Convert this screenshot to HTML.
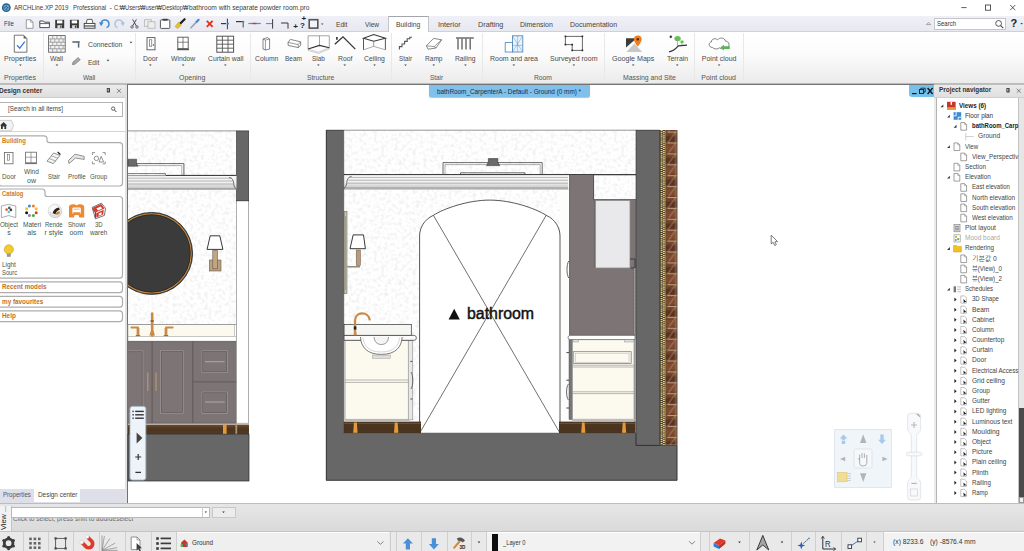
<!DOCTYPE html>
<html><head><meta charset="utf-8"><title>ARCHLine.XP 2019</title>
<style>
html,body{margin:0;padding:0;background:#fff}
body{width:1024px;height:551px;position:relative;overflow:hidden;font-family:"Liberation Sans", "NanumGothic", "Noto Sans CJK KR", sans-serif}
.b{position:absolute}
.t{position:absolute;white-space:nowrap;line-height:1;transform-origin:0 0}
svg.ov{position:absolute;left:0;top:0;pointer-events:none}
</style></head>
<body>
<div class="b" style="left:128px;top:85px;width:805.4px;height:418px;background:#fff"></div>
<div class="b" style="left:428.8px;top:85.2px;width:161.7px;height:12.2px;background:#7fc1ea;border-radius:0 0 2.5px 2.5px;box-shadow:0 0.5px 1px rgba(0,0,0,.25)"></div>
<div class="b" style="left:834px;top:429px;width:58px;height:59px;background:#f0f5fa;border:1px solid #dfe6ee;box-sizing:border-box;border-radius:1px"></div>
<div class="b" style="left:0;top:0;width:1024px;height:16px;background:#fff"></div>
<div class="b" style="left:0;top:16px;width:1024px;height:15px;background:linear-gradient(#f0f0f7,#e8e8f0);border-bottom:0.8px solid #d0d0d8"></div>
<div class="b" style="left:388.2px;top:16.2px;width:40.6px;height:15.8px;background:#fff;border:0.8px solid #c4c4cc;border-top-color:#a4a4ac;border-bottom:none;box-sizing:border-box"></div>
<div class="b" style="left:934.4px;top:17.5px;width:71.6px;height:12.3px;background:#fff;border:1px solid #c6c6cc;box-sizing:border-box"></div>
<div class="b" style="left:0;top:32px;width:1024px;height:52px;background:linear-gradient(#fff 0%,#fbfbfb 45%,#eaeaea 100%)"></div>
<div class="b" style="left:0;top:83.4px;width:1024px;height:1.6px;background:#bdbdbd"></div>
<div class="b" style="left:127px;top:83.8px;width:807px;height:1.1px;background:#747474"></div>
<div class="b" style="left:42.9px;top:33px;width:1px;height:49px;background:#e8e8e8"></div>
<div class="b" style="left:134.9px;top:33px;width:1px;height:49px;background:#e8e8e8"></div>
<div class="b" style="left:249.7px;top:33px;width:1px;height:49px;background:#e8e8e8"></div>
<div class="b" style="left:391.2px;top:33px;width:1px;height:49px;background:#e8e8e8"></div>
<div class="b" style="left:482.0px;top:33px;width:1px;height:49px;background:#e8e8e8"></div>
<div class="b" style="left:604.3px;top:33px;width:1px;height:49px;background:#e8e8e8"></div>
<div class="b" style="left:693.9px;top:33px;width:1px;height:49px;background:#e8e8e8"></div>
<div class="b" style="left:742.9px;top:33px;width:1px;height:49px;background:#e8e8e8"></div>
<div class="b" style="left:0;top:85px;width:125.4px;height:418px;background:#fff"></div>
<div class="b" style="left:125.4px;top:85px;width:1.6px;height:418px;background:#e2e2e2;border-right:1px solid #707070"></div>
<div class="b" style="left:0;top:85px;width:125.4px;height:12.3px;background:linear-gradient(#ececec,#dedede);border-bottom:1px solid #cfcfcf"></div>
<div class="b" style="left:-1px;top:102.2px;width:123.6px;height:14.4px;background:#fff;border:1px solid #b4b4b4;box-sizing:border-box"></div>
<div class="b" style="left:0;top:131.3px;width:125px;height:0.8px;background:#d4d4d4"></div>
<div class="b" style="left:0;top:489px;width:125.4px;height:14px;background:#dfdfe9"></div>
<div class="b" style="left:34.3px;top:489px;width:45.7px;height:13px;background:#fff"></div>
<div class="b" style="left:933.4px;top:85px;width:90.6px;height:418px;background:#fff"></div>
<div class="b" style="left:933.6px;top:85px;width:2.6px;height:418px;background:#ebebeb;border-right:0.7px solid #b4b4b4"></div>
<div class="b" style="left:933.6px;top:85px;width:90.4px;height:12.4px;background:linear-gradient(#eaeaea,#e0e0e0);border-bottom:1px solid #d0d0d0"></div>
<div class="b" style="left:1018.3px;top:98px;width:5.7px;height:405px;background:#e6e6e6;border-left:0.7px solid #c4c4c4"></div>
<div class="b" style="left:1019px;top:408.4px;width:5px;height:88.2px;background:#4a4a4a"></div>
<div class="b" style="left:1018.6px;top:497px;width:5.4px;height:5.6px;background:#f0f0f0;border:0.6px solid #999;box-sizing:border-box"></div>
<div class="b" style="left:908.6px;top:84.8px;width:25px;height:12.7px;background:#74c1ec;border-radius:0 0 0 3px"></div>
<div class="b" style="left:0;top:503px;width:1024px;height:28px;background:linear-gradient(#e6e6e6,#dadada);border-top:1px solid #bdbdbd;box-sizing:border-box"></div>
<div class="b" style="left:0;top:506px;width:11px;height:25px;background:#f2f2f2;border-right:0.7px solid #c4c4c4"></div>
<div class="b" style="left:11.4px;top:506.6px;width:198.2px;height:11.6px;background:#fff;border:0.8px solid #b8b8b8;box-sizing:border-box"></div>
<div class="b" style="left:201.8px;top:507.4px;width:0.7px;height:10px;background:#ccc"></div>
<div class="b" style="left:212px;top:506.6px;width:24px;height:11.6px;background:#ececec;border:0.7px solid #c8c8c8;box-sizing:border-box"></div>
<div class="b" style="left:0;top:530.6px;width:1024px;height:20.4px;background:#e9e9e9;border-top:1px solid #c4c4c4;box-sizing:border-box"></div>
<div class="b" style="left:23.0px;top:532px;width:0.9px;height:19px;background:#cfcfcf"></div>
<div class="b" style="left:47.800000000000004px;top:532px;width:0.9px;height:19px;background:#cfcfcf"></div>
<div class="b" style="left:73.19999999999999px;top:532px;width:0.9px;height:19px;background:#cfcfcf"></div>
<div class="b" style="left:98.6px;top:532px;width:0.9px;height:19px;background:#cfcfcf"></div>
<div class="b" style="left:125.3px;top:532px;width:0.9px;height:19px;background:#cfcfcf"></div>
<div class="b" style="left:150.6px;top:532px;width:0.9px;height:19px;background:#cfcfcf"></div>
<div class="b" style="left:176.1px;top:532px;width:0.9px;height:19px;background:#cfcfcf"></div>
<div class="b" style="left:390.20000000000005px;top:532px;width:0.9px;height:19px;background:#cfcfcf"></div>
<div class="b" style="left:396.1px;top:532px;width:0.9px;height:19px;background:#cfcfcf"></div>
<div class="b" style="left:421.20000000000005px;top:532px;width:0.9px;height:19px;background:#cfcfcf"></div>
<div class="b" style="left:446.8px;top:532px;width:0.9px;height:19px;background:#cfcfcf"></div>
<div class="b" style="left:471.0px;top:532px;width:0.9px;height:19px;background:#cfcfcf"></div>
<div class="b" style="left:486.20000000000005px;top:532px;width:0.9px;height:19px;background:#cfcfcf"></div>
<div class="b" style="left:700.2px;top:532px;width:0.9px;height:19px;background:#cfcfcf"></div>
<div class="b" style="left:708.6px;top:532px;width:0.9px;height:19px;background:#cfcfcf"></div>
<div class="b" style="left:749.1px;top:532px;width:0.9px;height:19px;background:#cfcfcf"></div>
<div class="b" style="left:791.1px;top:532px;width:0.9px;height:19px;background:#cfcfcf"></div>
<div class="b" style="left:815.1px;top:532px;width:0.9px;height:19px;background:#cfcfcf"></div>
<div class="b" style="left:841.1px;top:532px;width:0.9px;height:19px;background:#cfcfcf"></div>
<div class="b" style="left:865.6px;top:532px;width:0.9px;height:19px;background:#cfcfcf"></div>
<div class="b" style="left:882.6px;top:532px;width:0.9px;height:19px;background:#cfcfcf"></div>
<div class="b" style="left:177.4px;top:532.4px;width:212px;height:19px;background:#efefef;border-top:0.8px solid #fff"></div>
<div class="b" style="left:487px;top:532.4px;width:213px;height:19px;background:#f2f2f2;border-top:0.8px solid #fff"></div>
<div class="b" style="left:883.6px;top:532.4px;width:140.4px;height:19px;background:#f2f2f2;border-top:0.8px solid #fff"></div>
<div class="b" style="left:492.2px;top:534.3px;width:5.4px;height:16.7px;background:#0c0c0c"></div>
<svg class="ov" width="1024" height="551" viewBox="0 0 1024 551">
<defs>
<linearGradient id="mould" x1="0" y1="0" x2="0" y2="1"><stop offset="0" stop-color="#fafafa"/><stop offset="0.55" stop-color="#f0f0f0"/><stop offset="0.8" stop-color="#d4d4d4"/><stop offset="1" stop-color="#c4c4c4"/></linearGradient>
<filter id="nz" x="0" y="0" width="100%" height="100%" color-interpolation-filters="sRGB"><feTurbulence type="fractalNoise" baseFrequency="0.28" numOctaves="2" seed="7" stitchTiles="stitch"/><feColorMatrix type="matrix" values="0 0.16 0 0 0.91  0 0.16 0 0 0.91  0 0.16 0 0 0.91  0 0 0 0 1"/></filter>
<pattern id="tex" width="120" height="120" patternUnits="userSpaceOnUse"><rect width="120" height="120" fill="#fff" filter="url(#nz)"/></pattern>
<pattern id="brick" x="665.6" y="131.6" width="11.7" height="21.8" patternUnits="userSpaceOnUse"><rect width="11.7" height="21.8" fill="#70422a"/><rect x="0" y="4.6" width="11.7" height="5.4" fill="#5a3222"/><rect x="0" y="14" width="11.7" height="6" fill="#7e4a30"/><path d="M1.6 0.6H11.7M1.6 11.5H11.7" stroke="#cdb092" stroke-width="0.9"/><path d="M9.6 1L2.4 11M9.6 12L3 21.4" stroke="#bfa080" stroke-width="0.7"/><path d="M10 0V21.8" stroke="#a88a70" stroke-width="0.7"/></pattern>
<radialGradient id="sph" cx="0.4" cy="0.35" r="0.7"><stop offset="0" stop-color="#ffffff"/><stop offset="0.7" stop-color="#ececec"/><stop offset="1" stop-color="#c8c8c8"/></radialGradient>
<clipPath id="clipL"><rect x="128" y="100" width="130" height="300"/></clipPath>
</defs>
<rect x="128" y="131" width="108.5" height="194" fill="url(#tex)"/>
<path d="M128 130.9H236.5" stroke="#8a8a8a" stroke-width="0.9"/>
<rect x="236.5" y="200.8" width="12.2" height="222.4" fill="#fff" stroke="#777" stroke-width="0.6"/>
<rect x="236.5" y="130.9" width="12.2" height="69.9" fill="#676767" stroke="#2a2a2a" stroke-width="0.6"/>
<path d="M128 163.6H183.9V175.4" fill="none" stroke="#444" stroke-width="0.8"/><path d="M128 165.6H181.8V175.4" fill="none" stroke="#777" stroke-width="0.6"/>
<path d="M128 159.2H136.6V163.4L138 166.2H128Z" fill="#6a6a6a" stroke="#333" stroke-width="0.5"/>
<path d="M128 173.6H165.4V175.4" fill="none" stroke="#444" stroke-width="0.7"/>
<rect x="128" y="175.4" width="108.5" height="14" fill="url(#mould)"/>
<path d="M165.7 175.4H236.5" stroke="#2a2a2a" stroke-width="1"/><path d="M128 175.6H165.7" stroke="#666" stroke-width="0.7"/>
<path d="M128 178.2H232M128 181H233M128 184H234M128 188.6H236.5" stroke="#8c8c8c" stroke-width="0.6"/><path d="M128 189.4H236.5" stroke="#999" stroke-width="0.7"/>
<path d="M229 177.6C233 178 233.6 181 233.8 184.4C234 186.6 235.4 188.6 236.5 189" fill="none" stroke="#444" stroke-width="0.7"/>
<g clip-path="url(#clipL)"><circle cx="151.6" cy="253.4" r="41" fill="#3b3b3b" stroke="#222" stroke-width="0.8"/><circle cx="151.6" cy="253.4" r="39.6" fill="none" stroke="#c98b3c" stroke-width="1.1"/><circle cx="151.6" cy="253.4" r="38.6" fill="none" stroke="#222" stroke-width="0.5"/></g>
<rect x="209.4" y="260" width="11.6" height="11" fill="#b9a084" stroke="#6a5a48" stroke-width="0.6"/><rect x="212.8" y="250.6" width="4.6" height="18.2" fill="#c2a684" stroke="#6a5a48" stroke-width="0.6"/><path d="M210.2 235.8H219.8L222.9 249.4H207.1Z" fill="#fff" stroke="#222" stroke-width="0.9"/>
<rect x="128" y="324.5" width="106.7" height="11.8" fill="#fcf9ef" stroke="#999" stroke-width="0.5"/>
<path d="M128 324.5H236.5" stroke="#888" stroke-width="0.7"/>
<rect x="128" y="336.3" width="108.2" height="4.8" fill="#fff" stroke="#999" stroke-width="0.5"/>
<path d="M152.2 313.6V335.6" stroke="#c98b45" stroke-width="2.6" stroke-linecap="round"/><path d="M150.4 321H154" stroke="#5a3a1c" stroke-width="0.9"/><path d="M149.4 335.6L150.8 331H153.6L155 335.6Z" fill="#c98b45"/>
<path d="M136.6 328V335.6H139.4V328Z" fill="#c98b45"/><path d="M138 327.6H131.4" stroke="#c98b45" stroke-width="2" stroke-linecap="round"/><path d="M135.8 335.6H140.2" stroke="#8a5a28" stroke-width="0.9"/>
<path d="M164.6 328V335.6H167.4V328Z" fill="#c98b45"/><path d="M166 327.6H172.6" stroke="#c98b45" stroke-width="2" stroke-linecap="round"/><path d="M163.8 335.6H168.2" stroke="#8a5a28" stroke-width="0.9"/>
<rect x="128" y="341.4" width="108.2" height="81.8" fill="#7d7575"/>
<path d="M152.1 341.4V423M192.8 341.4V423M128 423.2H236.2M192.8 381.9H236.2" stroke="#5e5757" stroke-width="0.9"/>
<path d="M128 341.6H236.2" stroke="#555" stroke-width="0.7"/>
<path d="M128 350.8H143V413.2H128" fill="none" stroke="#a39c9c" stroke-width="0.6"/><path d="M128 351.6H142.2V412.4H128" fill="none" stroke="#5e5757" stroke-width="0.5"/>
<rect x="160.6" y="350.8" width="22.6" height="62.4" fill="none" stroke="#a39c9c" stroke-width="0.6"/><rect x="161.4" y="351.6" width="21" height="60.8" fill="none" stroke="#5e5757" stroke-width="0.5"/>
<path d="M147.8 372.6V391M156 372.6V391" stroke="#c2966a" stroke-width="1.1"/>
<rect x="202" y="350.8" width="25.4" height="21.80000000000001" fill="none" stroke="#a39c9c" stroke-width="0.6"/><rect x="202.8" y="351.6" width="23.8" height="20.20000000000001" fill="none" stroke="#5e5757" stroke-width="0.5"/><path d="M205 361.7H224.6" stroke="#b8b0ac" stroke-width="0.9"/>
<rect x="202" y="392" width="25.4" height="21.5" fill="none" stroke="#a39c9c" stroke-width="0.6"/><rect x="202.8" y="392.8" width="23.8" height="19.9" fill="none" stroke="#5e5757" stroke-width="0.5"/><path d="M205 402H224.6" stroke="#b8b0ac" stroke-width="0.9"/>
<rect x="128" y="424.6" width="121" height="9.6" fill="#503822"/><path d="M128 426H249" stroke="#7a5a38" stroke-width="0.8"/><path d="M128 430H249" stroke="#4a321c" stroke-width="0.8"/>
<rect x="223" y="424.6" width="3.6" height="9.6" fill="#e49a3a"/><rect x="235.4" y="424.6" width="1.8" height="9.6" fill="#a8946e"/>
<rect x="128" y="434.2" width="121" height="46.8" fill="#676767" stroke="#2a2a2a" stroke-width="0.7"/>
<rect x="130" y="406.4" width="15.8" height="73.6" rx="2.4" fill="#edf3f9" stroke="#a9bccb" stroke-width="0.9"/><rect x="132.4" y="410.7" width="1.4" height="1.4" fill="#333"/><path d="M135.2 411.4H143.8" stroke="#333" stroke-width="1.4"/><rect x="132.4" y="414.09999999999997" width="1.4" height="1.4" fill="#333"/><path d="M135.2 414.79999999999995H143.8" stroke="#333" stroke-width="1.4"/><rect x="132.4" y="417.5" width="1.4" height="1.4" fill="#333"/><path d="M135.2 418.2H143.8" stroke="#333" stroke-width="1.4"/><path d="M136.6 432.4L142.4 438L136.6 443.6Z" fill="#444"/><path d="M135.2 457H141.2M138.2 454V460" stroke="#333" stroke-width="1.2"/><path d="M135.4 472.4H141" stroke="#333" stroke-width="1.3"/>
<rect x="343.6" y="130.4" width="292.6" height="303" fill="url(#tex)"/>
<path d="M343.6 130.2H636" stroke="#8a8a8a" stroke-width="0.9"/>
<path d="M419.6 433.2V236C419.6 228 424 219.6 433.4 215.3C444 208.5 468 200.1 489.8 200.1C511.6 200.1 535.6 208.5 546.2 215.3C555.6 219.6 560 228 560 236V433.2Z" fill="#fff"/>
<rect x="560" y="189.4" width="9.5" height="243.8" fill="#fdfdfd"/>
<path d="M433.4 215.3L560 433.2M546.2 215.3L419.6 433.2" stroke="#333" stroke-width="0.7"/>
<path d="M419.6 433.2V236C419.6 228 424 219.6 433.4 215.3C444 208.5 468 200.1 489.8 200.1C511.6 200.1 535.6 208.5 546.2 215.3C555.6 219.6 560 228 560 236V433.2" fill="none" stroke="#444" stroke-width="0.9"/>
<path d="M443 174.4V162.6H542.2V174.4" fill="none" stroke="#444" stroke-width="0.8"/><path d="M445 174.4V164.6H540.2V174.4" fill="none" stroke="#777" stroke-width="0.6"/>
<path d="M488.4 158.6H497.8V162L499.6 165.6H486.6L488.4 162Z" fill="#6a6a6a" stroke="#333" stroke-width="0.6"/>
<path d="M460.5 175V172.8H525V175" fill="none" stroke="#444" stroke-width="0.8"/>
<rect x="343.6" y="174.4" width="224.6" height="14.8" fill="url(#mould)"/>
<path d="M349 177.4H568M348 180.2H568M347 183.2H568M344 187.8H568" stroke="#8c8c8c" stroke-width="0.6"/><path d="M343.6 189H568.4" stroke="#999" stroke-width="0.8"/>
<path d="M351.6 176.4C347.6 177 347 180 346.6 183.4C346.4 186 345 187.8 343.6 188.4" fill="none" stroke="#444" stroke-width="0.7"/>
<path d="M343.6 174.6H636" stroke="#2a2a2a" stroke-width="1"/>
<rect x="344" y="211.6" width="3" height="82" fill="#c9c4ae" stroke="#555" stroke-width="0.5"/><path d="M345.5 216V290" stroke="#777" stroke-width="0.5"/>
<path d="M347.2 266.8H360" stroke="#8a8478" stroke-width="1.4"/><rect x="356.2" y="250" width="4.2" height="15.6" fill="#b79c7c" stroke="#6a5a48" stroke-width="0.5"/><path d="M353.2 234.9H363.5L365.4 248.7H350Z" fill="#fff" stroke="#222" stroke-width="0.9"/>
<rect x="344" y="324.5" width="67.3" height="11" fill="#f6f6f2" stroke="#333" stroke-width="0.7"/>
<rect x="345" y="340.3" width="64" height="79" fill="#fcf9ef" stroke="#888" stroke-width="0.7"/>
<rect x="408.2" y="340.3" width="4.6" height="79.6" fill="#e8e8e6" stroke="#777" stroke-width="0.5"/>
<path d="M344 335.4H414.2Q416.4 335.6 416.4 337.8Q416.4 340.2 414.2 340.3H344Z" fill="#fbfbfb" stroke="#333" stroke-width="0.7"/>
<path d="M360.5 337C361 347 367 354.4 381.4 354.4C395.6 354.4 401.6 347 402.2 337" fill="#fff" stroke="#444" stroke-width="0.7"/>
<path d="M363 337.6C364 346 369 352 381.4 352C393.6 352 398.6 346 399.6 337.6" fill="none" stroke="#aaa" stroke-width="0.5"/>
<path d="M374 337C374.4 341.6 377 344.5 381.3 344.5C385.6 344.5 388.2 341.6 388.6 337" fill="#f4f4f4" stroke="#555" stroke-width="0.6"/>
<rect x="372.4" y="355" width="18" height="3.2" fill="#ddd" stroke="#888" stroke-width="0.4"/>
<path d="M345 380H408.2M345 382.4H408.2" stroke="#888" stroke-width="0.6"/>
<path d="M411 372C413.4 375 413.4 386 411 389" fill="none" stroke="#555" stroke-width="0.9"/><path d="M410.4 361.4H412.4M410.4 399H412.4" stroke="#333" stroke-width="0.9"/>
<path d="M355 334.6V321C355 311 368.8 311 369.8 320.4" fill="none" stroke="#c98b45" stroke-width="2.3"/><path d="M353.6 335.2L354.4 330H355.8L356.8 335.2Z" fill="#c98b45"/><rect x="353.8" y="326.4" width="2.6" height="3.2" fill="#222"/>
<rect x="343.6" y="421.6" width="77.4" height="11.6" fill="#4b3520"/><path d="M343.6 423.4H421" stroke="#7a5a38" stroke-width="0.8"/><path d="M343.6 428.6H421" stroke="#4a321c" stroke-width="0.9"/>
<path d="M344.6 419.6H409.6V421.6H344.6Z" fill="#bbb"/>
<path d="M354.0 422.4H356.79999999999995L357.59999999999997 433H353.2Z" fill="#e49a3a"/>
<path d="M394.8 422.4H397.59999999999997L398.4 433H394.0Z" fill="#e49a3a"/>
<rect x="569.5" y="175" width="66.5" height="160.4" fill="#7d7575"/>
<rect x="594" y="175.4" width="42" height="24" fill="url(#tex)"/>
<path d="M569.6 175V335M593.6 175V199.6M593.6 199.6H636" stroke="#4a4545" stroke-width="0.7"/>
<path d="M594.4 199.8V268" stroke="#5a5454" stroke-width="0.5" stroke-dasharray="2 0.6"/>
<rect x="595.4" y="200.4" width="34.6" height="67.6" fill="#e9e9eb" stroke="#8a8a8a" stroke-width="0.8"/>
<path d="M630 259H635V268H630.6" fill="none" stroke="#222" stroke-width="0.7"/>
<path d="M634.8 268V433" stroke="#a8a4a4" stroke-width="1.4"/><path d="M633.8 268V420" stroke="#555" stroke-width="0.4" stroke-dasharray="3 0.8"/>
<path d="M568.8 261C566.4 264 566.4 275 568.8 278" fill="none" stroke="#555" stroke-width="0.9"/>
<rect x="569" y="339.6" width="3.4" height="80" fill="#777" stroke="#444" stroke-width="0.4"/>
<rect x="572.4" y="339.6" width="61.6" height="79.6" fill="#fcf9ef" stroke="#888" stroke-width="0.6"/>
<path d="M570 335.4H635V339.6H570Q568 339.4 568 337.5Q568 335.6 570 335.4Z" fill="#fff" stroke="#444" stroke-width="0.6"/>
<rect x="573" y="339.8" width="5.6" height="2.2" fill="#ddd" stroke="#888" stroke-width="0.4"/><rect x="624.6" y="339.8" width="9" height="2.2" fill="#ddd" stroke="#888" stroke-width="0.4"/>
<rect x="573.2" y="351.7" width="58" height="11.8" fill="#f4f1e8" stroke="#777" stroke-width="0.7"/><rect x="575.6" y="353.2" width="53.4" height="9" fill="#fcf9ef" stroke="#aaa" stroke-width="0.4"/>
<path d="M572.4 365.2H634M572.4 367H634M572.4 391.8H634M572.4 393.6H634" stroke="#888" stroke-width="0.6"/>
<path d="M568.4 384C566 387 566 397 568.4 400" fill="none" stroke="#555" stroke-width="0.9"/><path d="M566.4 352.6H569M566.4 380.2H569M566.4 408H569" stroke="#333" stroke-width="0.9"/>
<rect x="559" y="421.6" width="76.4" height="11.6" fill="#4b3520"/><path d="M559 423.4H635.4" stroke="#7a5a38" stroke-width="0.8"/><path d="M559 428.6H635.4" stroke="#4a321c" stroke-width="0.9"/>
<path d="M572 419.4H634.4V421.6H572Z" fill="#bbb"/>
<path d="M582.0 422.4H584.6L585.4 433H581.1999999999999Z" fill="#e49a3a"/>
<path d="M622.8000000000001 422.4H625.4000000000001L626.2 433H622.0Z" fill="#e49a3a"/>
<path d="M326 130H343.6V433.2H636V130H659.6V445.4H677.2V480.4H326Z" fill="#676767"/>
<path d="M326.3 130V480.3H677V445.4" fill="none" stroke="#2a2a2a" stroke-width="0.8"/><path d="M326 130.2H343.6M636 130.2H659.6" stroke="#333" stroke-width="0.6"/>
<path d="M343.7 130V433.2H636V130" fill="none" stroke="#333" stroke-width="0.6"/>
<path d="M636 433.2V445.4H677.2M659.7 130V445.4" fill="none" stroke="#222" stroke-width="0.8"/>
<rect x="659.8" y="130" width="5.8" height="314.8" fill="#4a3f28"/><path d="M661.6 130V444.8" stroke="#ecd78c" stroke-width="1.8" stroke-dasharray="1.2 0.9"/><path d="M663.9 131.05V444.8" stroke="#ecd78c" stroke-width="1.8" stroke-dasharray="1.2 0.9"/>
<rect x="665.6" y="130" width="11.7" height="314.8" fill="url(#brick)"/><path d="M677 130V445" stroke="#6a5a4a" stroke-width="0.6"/>
<path d="M448.6 319.4L454.2 308.8L459.8 319.4Z" fill="#111"/>
<path d="M771.2 235.2V243.8L773.2 242.3L774.8 245.5L776.3 244.7L774.9 241.8L777.6 241.6Z" fill="#fff" stroke="#444" stroke-width="0.7"/>
<path d="M843.5 434.4L847.4 438.6H845.2V444H841.8V438.6H839.6Z" fill="#a9c9ea"/><path d="M841.4 440.4H845.6" stroke="#f0f5fa" stroke-width="0.7"/><path d="M882 444L885.9 439.8H883.7V434.4H880.3V439.8H878.1Z" fill="#a9c9ea"/><path d="M863.2 434.2L866.4 443H860Z" fill="#b4b4b4"/><path d="M863.2 482L866.4 473.2H860Z" fill="#b4b4b4"/><path d="M840 459L845.2 456.8V461.2Z" fill="#b4b4b4"/><path d="M887.6 459L882.4 456.8V461.2Z" fill="#b4b4b4"/><rect x="854" y="449" width="18" height="19" rx="1.5" fill="#f4f8fb" stroke="#d4dce4" stroke-width="0.7"/><path d="M859.6 458V463.4Q860 466 863 466Q866.6 466 866.8 463.4V455M859.6 458.6V454.6M862 458V453M864.4 458V453.4M859.6 460L858 458.4" fill="none" stroke="#999" stroke-width="0.8"/><rect x="837.6" y="472.4" width="9.4" height="9.4" fill="#f3dc94" stroke="#d8c070" stroke-width="0.5"/><path d="M847 473.6H851M847 476H851M847 478.4H851M847 480.6H851" stroke="#c4c4c4" stroke-width="0.8"/>
<path d="M907.6 416Q907.6 413.4 910 413.4H918Q920.6 413.4 920.6 416V429Q920.6 431.6 918.4 433Q916.6 434.4 916.6 437V476Q916.6 478 918.6 479.4Q920.6 480.6 920.6 483V497.4Q920.6 500 918 500H910Q907.6 500 907.6 497.4V483Q907.6 480.6 909.6 479.4Q911.4 478 911.4 476V437Q911.4 434.4 909.8 433Q907.6 431.6 907.6 429Z" fill="#f7f9fb" stroke="#dde2e8" stroke-width="0.8"/><path d="M911 425H917M914 422V428" stroke="#b8b8b8" stroke-width="1.1"/><path d="M911.4 483.4H916.8" stroke="#b8b8b8" stroke-width="1.2"/><rect x="906.4" y="452.2" width="15.4" height="3.6" rx="1.6" fill="#f7f9fb" stroke="#d8dde4" stroke-width="0.7"/><rect x="910.6" y="489" width="7" height="7" fill="none" stroke="#ccc" stroke-width="0.6"/><path d="M916 413.6Q919.8 414 920.4 417.6L917.6 415.2Z" fill="#999"/>
<circle cx="6.3" cy="7.7" r="4.4" fill="#1f5f8e"/><circle cx="6.3" cy="7.7" r="2.6" fill="none" stroke="#7fb2d6" stroke-width="0.9"/><path d="M4.4 5.8L8.2 9.6M8.2 5.8L4.4 9.6" stroke="#9cc6e2" stroke-width="0.7"/>
<path d="M961.3 7.6H966.6" stroke="#333" stroke-width="0.8"/>
<rect x="985.4" y="5" width="5.2" height="5.2" fill="none" stroke="#333" stroke-width="0.8"/>
<path d="M1010.2 5L1015.3 10.2M1015.3 5L1010.2 10.2" stroke="#333" stroke-width="0.8"/>
<circle cx="998.6" cy="23.4" r="2.9" fill="none" stroke="#444" stroke-width="0.9"/><path d="M1000.7 25.6L1003.2 28.2" stroke="#444" stroke-width="1.1"/>
<path d="M926.4 24.6L928.6 22.3L930.8 24.6Z" fill="none" stroke="#888" stroke-width="0.7"/>
<path d="M1020.3 23L1023 23L1021.6 24.6Z" fill="#444"/>
<path d="M26.3 19.8H30.6L33 22.2V28.3H26.3Z" fill="#fff" stroke="#777" stroke-width="0.7"/><path d="M30.6 19.8V22.2H33" fill="none" stroke="#777" stroke-width="0.6"/>
<path d="M39.8 27.6V21H43.4L44.4 22.2H49.4V27.6Z" fill="#fff" stroke="#3a3a3a" stroke-width="0.9"/><path d="M39.8 23.6H49.4" stroke="#3a3a3a" stroke-width="0.8"/>
<rect x="55.2" y="19.8" width="9" height="8.4" fill="#3a3a3a"/><rect x="57.0" y="20.4" width="5.4" height="3" fill="#fff"/><rect x="57.400000000000006" y="25.2" width="4.6" height="3" fill="#ddd"/><rect x="60.2" y="25.6" width="1.3" height="2.2" fill="#3a3a3a"/>
<rect x="69.9" y="19.8" width="9" height="8.4" fill="#3a3a3a"/><rect x="71.7" y="20.4" width="5.4" height="3" fill="#fff"/><rect x="72.10000000000001" y="25.2" width="4.6" height="3" fill="#ddd"/><rect x="74.9" y="25.6" width="1.3" height="2.2" fill="#3a3a3a"/>
<path d="M86.2 23.4L87.2 19.4H92L93 23.4" fill="#fff" stroke="#3a3a3a" stroke-width="0.8"/><rect x="84.2" y="23.4" width="10.8" height="4.8" fill="#fff" stroke="#3a3a3a" stroke-width="0.9"/><path d="M84.2 26H95" stroke="#3a3a3a" stroke-width="1.1"/>
<path d="M101.2 24A3.9 3.9 0 1 1 106.5 27.6" fill="none" stroke="#3c8ad6" stroke-width="1.5"/><path d="M99 22.2L103.6 22.6L101 26.2Z" fill="#3c8ad6"/>
<path d="M122.8 24A3.9 3.9 0 1 0 117.5 27.6" fill="none" stroke="#b4c3dc" stroke-width="1.5"/><path d="M125 22.2L120.4 22.6L123 26.2Z" fill="#b4c3dc"/>
<path d="M132.6 19.4L136.4 26M136.4 19.4L132.6 26" stroke="#3a3a3a" stroke-width="0.9"/><circle cx="132" cy="27" r="1.2" fill="none" stroke="#3a3a3a" stroke-width="0.7"/><circle cx="137" cy="27" r="1.2" fill="none" stroke="#3a3a3a" stroke-width="0.7"/>
<rect x="144.3" y="19.8" width="7" height="6.4" fill="#eee" stroke="#aaa" stroke-width="0.7"/><rect x="148" y="21.8" width="7" height="6.4" fill="#eee" stroke="#aaa" stroke-width="0.7"/>
<rect x="160.4" y="19.8" width="9.4" height="8.6" rx="0.8" fill="#fff" stroke="#555" stroke-width="1"/><rect x="162.6" y="18.8" width="5" height="1.8" fill="#3a3a3a"/>
<path d="M180.4 23.4L184.6 19.2" stroke="#222" stroke-width="2.2" stroke-linecap="round"/><path d="M175 26.4L178.6 22.2L181.4 25L177.8 28.6Z" fill="#e9c31e" stroke="#a88a10" stroke-width="0.4"/>
<path d="M196.2 22.2L198.6 19.8" stroke="#3c8ad6" stroke-width="2.2" stroke-linecap="round"/><path d="M191 27.8L195.8 22.6" stroke="#9aa4b4" stroke-width="1.6" stroke-linecap="round"/>
<path d="M206.8 20.8L212.6 26.8M212.6 20.8L206.8 26.8" stroke="#e2341d" stroke-width="1.9"/>
<path d="M227.4 18.6V29.2" stroke="#3a3a3a" stroke-width="1"/><path d="M221 23.6H226" stroke="#3a3a3a" stroke-width="1.2"/><path d="M226.6 23.6H229" stroke="#3c8ad6" stroke-width="1.6"/>
<path d="M236 21.6H243.2" stroke="#3a3a3a" stroke-width="1.2"/><path d="M243.2 21V27.4" stroke="#666" stroke-width="1.2"/><path d="M242.4 21.6H244.3" stroke="#3c8ad6" stroke-width="1.4"/>
<path d="M248.4 23.5H260.8" stroke="#4a8fd8" stroke-width="1.2"/><path d="M252.6 23.5H256.4" stroke="#e2341d" stroke-width="1.4"/>
<path d="M266 23.6H272" stroke="#3c8ad6" stroke-width="1"/><path d="M272.6 19.2V28.6" stroke="#3a3a3a" stroke-width="1"/>
<path d="M281 23H288V28.6" fill="none" stroke="#3a3a3a" stroke-width="1"/>
<rect x="309.2" y="19.7" width="8.6" height="8.4" fill="#f4f4f8" stroke="#555" stroke-width="1.6"/>
<path d="M320.9 23.4L323.5 23.4L322.2 25Z" fill="#555"/>
<path d="M19.099999999999998 64.4H21.7L20.4 66Z" fill="#444"/>
<path d="M55.650000000000006 64.4H58.25L56.95 66Z" fill="#444"/>
<path d="M129.7 41.8H132.3L131 43.4Z" fill="#444"/>
<path d="M106.7 59.8H109.3L108 61.4Z" fill="#444"/>
<path d="M149.1 64.4H151.70000000000002L150.4 66Z" fill="#444"/>
<path d="M181.85 64.4H184.45000000000002L183.15 66Z" fill="#444"/>
<path d="M224.04999999999998 64.4H226.65L225.35 66Z" fill="#444"/>
<path d="M317.09999999999997 64.4H319.7L318.4 66Z" fill="#444"/>
<path d="M343.45 64.4H346.05L344.75 66Z" fill="#444"/>
<path d="M373.3 64.4H375.90000000000003L374.6 66Z" fill="#444"/>
<path d="M404.2 64.4H406.8L405.5 66Z" fill="#444"/>
<path d="M432.45 64.4H435.05L433.75 66Z" fill="#444"/>
<path d="M464.15 64.4H466.75L465.45 66Z" fill="#444"/>
<path d="M512.5 64.4H515.0999999999999L513.8 66Z" fill="#444"/>
<path d="M572.5500000000001 64.4H575.15L573.85 66Z" fill="#444"/>
<path d="M631.9000000000001 64.4H634.5L633.2 66Z" fill="#444"/>
<path d="M675.95 64.4H678.55L677.25 66Z" fill="#444"/>
<path d="M717.8 64.4H720.3999999999999L719.0999999999999 66Z" fill="#444"/>
<path d="M14.3 35.2H23.6L26.9 38.5V52.2H14.3Z" fill="#fff" stroke="#555" stroke-width="0.8"/><path d="M23.6 35.2V38.5H26.9Z" fill="#555"/><path d="M17 45.2L19.8 48.2L24.8 41.6" fill="none" stroke="#3c7fd0" stroke-width="1.3"/>
<rect x="48.6" y="35.6" width="16.6" height="16.6" fill="#f2f2f2" stroke="#555" stroke-width="0.8"/><path d="M48.6 38.9H65.2" stroke="#777" stroke-width="0.6"/><path d="M48.6 42.2H65.2" stroke="#777" stroke-width="0.6"/><path d="M48.6 45.5H65.2" stroke="#777" stroke-width="0.6"/><path d="M48.6 48.8H65.2" stroke="#777" stroke-width="0.6"/><path d="M52.7 35.6V38.9" stroke="#777" stroke-width="0.6"/><path d="M56.9 35.6V38.9" stroke="#777" stroke-width="0.6"/><path d="M61 35.6V38.9" stroke="#777" stroke-width="0.6"/><path d="M50.7 38.9V42.199999999999996" stroke="#777" stroke-width="0.6"/><path d="M54.8 38.9V42.199999999999996" stroke="#777" stroke-width="0.6"/><path d="M59 38.9V42.199999999999996" stroke="#777" stroke-width="0.6"/><path d="M63.1 38.9V42.199999999999996" stroke="#777" stroke-width="0.6"/><path d="M52.7 42.2V45.5" stroke="#777" stroke-width="0.6"/><path d="M56.9 42.2V45.5" stroke="#777" stroke-width="0.6"/><path d="M61 42.2V45.5" stroke="#777" stroke-width="0.6"/><path d="M50.7 45.5V48.8" stroke="#777" stroke-width="0.6"/><path d="M54.8 45.5V48.8" stroke="#777" stroke-width="0.6"/><path d="M59 45.5V48.8" stroke="#777" stroke-width="0.6"/><path d="M63.1 45.5V48.8" stroke="#777" stroke-width="0.6"/><path d="M52.7 48.8V52.099999999999994" stroke="#777" stroke-width="0.6"/><path d="M56.9 48.8V52.099999999999994" stroke="#777" stroke-width="0.6"/><path d="M61 48.8V52.099999999999994" stroke="#777" stroke-width="0.6"/>
<path d="M72.4 42H78" stroke="#444" stroke-width="1.3"/><path d="M78.6 41.2V47.6" stroke="#666" stroke-width="1.5"/><path d="M77.6 42H79.8" stroke="#3c8ad6" stroke-width="1.3"/>
<path d="M72.4 64.6L73 62L78.2 57.6L80.2 59.8L75 64.2Z" fill="#aaa" stroke="#666" stroke-width="0.6"/>
<rect x="147" y="37.6" width="8" height="12.2" fill="#fff" stroke="#555" stroke-width="0.9"/><rect x="149.6" y="39.8" width="2.2" height="6.4" fill="#fff" stroke="#555" stroke-width="0.6"/><path d="M153.4 44V46" stroke="#555" stroke-width="0.8"/>
<rect x="177.8" y="37.2" width="10.4" height="11.4" fill="#fff" stroke="#555" stroke-width="0.9"/><path d="M183 37.2V48.6M177.8 42.2H188.2" stroke="#555" stroke-width="0.7"/><path d="M177 49.6H189" stroke="#555" stroke-width="1.2"/>
<rect x="216.8" y="36.2" width="16.8" height="16" fill="#fff" stroke="#555" stroke-width="1"/><path d="M222.4 36.2V52.2" stroke="#555" stroke-width="0.9"/><path d="M228 36.2V52.2" stroke="#555" stroke-width="0.9"/><path d="M216.8 40.2H233.6" stroke="#555" stroke-width="0.9"/><path d="M216.8 44.2H233.6" stroke="#555" stroke-width="0.9"/><path d="M216.8 48.2H233.6" stroke="#555" stroke-width="0.9"/>
<path d="M263 39V49L265.4 50L269.6 49V39L267.2 37.6Z" fill="#fff" stroke="#555" stroke-width="0.7"/><path d="M265.4 40V50M263 39L265.4 40L269.6 39" fill="none" stroke="#555" stroke-width="0.6"/>
<path d="M288 42.4L290.4 39.4L300.6 41.8L300.8 45L298.4 47.6L288.2 45.4Z" fill="#fff" stroke="#555" stroke-width="0.7"/><path d="M288 42.4L298.2 44.6L298.4 47.6M298.2 44.6L300.6 41.8" fill="none" stroke="#555" stroke-width="0.6"/>
<path d="M308.1 49.1V35.8H329.3V47.7M319.5 35.8V45.4" fill="none" stroke="#6a6a6a" stroke-width="0.6"/><path d="M308.1 49.1L318.4 52.2L329.3 47.7V49L318.4 53.5L308.1 50.4Z" fill="#f2f2f2" stroke="#aaa" stroke-width="0.5"/><path d="M308.1 49.1L319.5 45.4L329.3 47.7" fill="none" stroke="#333" stroke-width="1.1"/>
<path d="M334.8 44.3L343 36.8L355.3 49.1" fill="none" stroke="#333" stroke-width="1.3"/><path d="M336.9 37V39.8" stroke="#222" stroke-width="1.5"/>
<path d="M363.5 38.2L373.7 34.5L385.4 38.2L373.7 41.3Z" fill="#fff" stroke="#3a3a3a" stroke-width="1.1"/><path d="M363.5 38.2V49.8M385.4 38.2V49.8" stroke="#444" stroke-width="0.9"/><path d="M373.7 41.3V46.4" stroke="#555" stroke-width="0.6"/><path d="M363.5 49.8L373.7 46.4L385.4 49.8" fill="none" stroke="#777" stroke-width="0.6"/>
<path d="M399.4 49.6V46.6H402V44H404.6V41.4H407.2V38.8H409.8V37.2H412" fill="none" stroke="#555" stroke-width="1.1"/>
<path d="M426.4 45.8L433.6 38.4L441.6 39.8L436 48L428 49.2Z" fill="#fff" stroke="#555" stroke-width="0.7"/><path d="M426.4 45.8L434.2 46.6L441.6 39.8M434.2 46.6L436 48" fill="none" stroke="#555" stroke-width="0.6"/>
<path d="M456 38H473.8" stroke="#555" stroke-width="1.3"/><path d="M458 38.6V49.6" stroke="#666" stroke-width="1.4"/><path d="M462 38.6V49.6" stroke="#666" stroke-width="1.4"/><path d="M466 38.6V49.6" stroke="#666" stroke-width="1.4"/><path d="M470.2 38.6V49.6" stroke="#666" stroke-width="1.4"/>
<rect x="512.4" y="35.8" width="10.4" height="16.2" fill="#eaf3fb" stroke="#4b7fb2" stroke-width="0.8"/><rect x="505.2" y="42.6" width="7.2" height="9.4" fill="#fff" stroke="#4b7fb2" stroke-width="0.8"/><path d="M512.4 35.8L522.8 52M522.8 35.8L512.4 52M517.6 35.8V52M512.4 45.4H522.8" stroke="#5b9bd8" stroke-width="0.5"/>
<path d="M565.4 36.4H582.4V50.4H572.2V44.6H565.4Z" fill="none" stroke="#444" stroke-width="0.8"/><rect x="564.6" y="35.6" width="1.6" height="1.6" fill="#222"/><rect x="581.6" y="35.6" width="1.6" height="1.6" fill="#222"/><rect x="581.6" y="49.6" width="1.6" height="1.6" fill="#222"/><rect x="571.4000000000001" y="49.6" width="1.6" height="1.6" fill="#222"/><rect x="571.4000000000001" y="43.800000000000004" width="1.6" height="1.6" fill="#222"/><rect x="564.6" y="43.800000000000004" width="1.6" height="1.6" fill="#222"/>
<path d="M626 38.2H636.6L626 47.6Z" fill="#3c3c3c"/><path d="M626.4 52L634.4 43.6L642.2 52Z" fill="#c8c8c8"/><path d="M637.8 35.4A3.9 3.9 0 0 1 641.7 39.3C641.7 42 637.8 46.6 637.8 46.6C637.8 46.6 633.9 42 633.9 39.3A3.9 3.9 0 0 1 637.8 35.4Z" fill="#ee7d1e"/><circle cx="637.8" cy="39.2" r="1.2" fill="#333"/>
<path d="M669 51.8C674 51 676 48.6 678.4 45.8L687 45.2" fill="none" stroke="#333" stroke-width="1.2"/><circle cx="670.8" cy="36.8" r="1.2" fill="#333"/><path d="M677.4 46V41.4M682 45.4V43.2" stroke="#5a3" stroke-width="0.7"/><ellipse cx="677.6" cy="38.6" rx="3.2" ry="2.6" fill="#6bbd5b"/><ellipse cx="682" cy="41.8" rx="1.7" ry="1.5" fill="#6bbd5b"/>
<path d="M712.4 47.4C708.4 47.4 708 42.6 711.4 42C711.2 38.6 716 37.8 717.6 39.8C719.6 37 725 37.6 725.4 41.2C729.4 41 730.6 46.6 726.6 47.6C724 49.4 721 49 719.6 47.8C717.4 49.6 714 49.2 712.4 47.4Z" fill="#fff" stroke="#555" stroke-width="0.7"/><path d="M720.4 47.6L724 44.8V46.2H729.8V49H724V50.4Z" fill="#5bb45a"/>
<rect x="106.8" y="88" width="3.2" height="4.4" rx="0.6" fill="#3a3a3a"/><rect x="107.6" y="88.8" width="1.2" height="2.6" fill="#bbb"/>
<path d="M117 88.8L121 92.8M121 88.8L117 92.8" stroke="#555" stroke-width="0.7"/>
<circle cx="113.2" cy="108.6" r="1.7" fill="none" stroke="#444" stroke-width="0.8"/><path d="M114.4 109.9L116.4 112" stroke="#444" stroke-width="1"/>
<path d="M-1 120.4H11.4L13.6 125.6L11.4 130.8H-1Z" fill="#f2f2f2" stroke="#bdbdbd" stroke-width="0.7"/>
<path d="M0 125.6L3.6 122L7.2 125.6H6.2V129H4.4V126.6H2.8V129H1V125.6Z" fill="#333"/>
<path d="M-1 183.5V138.3Q-1 135.8 1.5 135.8H44Q47 135.8 47 138.8V140.6Q47 142.6 49.5 142.6H119.5Q122.5 142.6 122.5 145.6V183Q122.5 186 119.5 186H1.5Q-1 186 -1 183.5Z" fill="#fff" stroke="#adadad" stroke-width="1.2"/>
<path d="M-1 275.7V191.5Q-1 189 1.5 189H42Q45 189 45 192V194.5Q45 196.5 47.5 196.5H119.5Q122.5 196.5 122.5 199.5V275.2Q122.5 278.2 119.5 278.2H1.5Q-1 278.2 -1 275.7Z" fill="#fff" stroke="#adadad" stroke-width="1.2"/>
<rect x="-3" y="281.8" width="125.5" height="10.899999999999977" rx="3" fill="#fff" stroke="#adadad" stroke-width="1.2"/>
<rect x="-3" y="296.3" width="125.5" height="10.899999999999977" rx="3" fill="#fff" stroke="#adadad" stroke-width="1.2"/>
<rect x="-3" y="310.8" width="125.5" height="10.899999999999977" rx="3" fill="#fff" stroke="#adadad" stroke-width="1.2"/>
<rect x="4.4" y="152.4" width="8.6" height="11.4" fill="#fff" stroke="#666" stroke-width="0.8"/><rect x="7.4" y="154.4" width="2.2" height="5.8" fill="#fff" stroke="#666" stroke-width="0.6"/>
<rect x="25.6" y="152.2" width="10.8" height="10.6" fill="#fff" stroke="#666" stroke-width="0.8"/><path d="M31 152.2V162.8M25.6 157.2H36.4" stroke="#666" stroke-width="0.6"/><path d="M25 163.6H37" stroke="#666" stroke-width="1"/>
<path d="M47 161.2L53.6 153L60 155.4L53.4 163.6Z" fill="#f4f4f4" stroke="#666" stroke-width="0.7"/><path d="M49.2 158.6L55.6 161M51.4 155.8L57.8 158.2" stroke="#666" stroke-width="0.5"/><path d="M57.6 152L60.4 154.4" stroke="#222" stroke-width="1.3"/>
<path d="M68.4 160.6L75 154.2L84.2 156.4V159.4L75.4 158L69 163.6Z" fill="#e8e8e8" stroke="#666" stroke-width="0.7"/>
<path d="M92.4 155V152.6H95M102.6 152.6H105.2V155M105.2 161.4V163.8H102.6M95 163.8H92.4V161.4" fill="none" stroke="#666" stroke-width="0.7"/><circle cx="96.4" cy="158.4" r="2.2" fill="none" stroke="#666" stroke-width="0.7"/><path d="M99 162L101.2 156.4L103.6 162Z" fill="none" stroke="#666" stroke-width="0.7"/>
<path d="M1.4 206V217.6L8.6 215.6L15.8 217.6V206L8.6 204.4Z" fill="#fff" stroke="#888" stroke-width="0.7"/><circle cx="9.3" cy="207.9" r="1.3" fill="#2f6a6a"/><circle cx="6.6" cy="209.6" r="1.3" fill="#e2582a"/><circle cx="10.9" cy="209.9" r="1.3" fill="#3a3a3a"/><circle cx="8.8" cy="212" r="1.3" fill="#5cc0e0"/>
<circle cx="36.20" cy="212.79" r="1.5" fill="#e0392a"/><circle cx="33.39" cy="215.60" r="1.5" fill="#3fae3c"/><circle cx="29.41" cy="215.60" r="1.5" fill="#8a86a8"/><circle cx="26.60" cy="212.79" r="1.5" fill="#181818"/><circle cx="26.60" cy="208.81" r="1.5" fill="#f2c21e"/><circle cx="29.41" cy="206.00" r="1.5" fill="#3c8ad6"/><circle cx="33.39" cy="206.00" r="1.5" fill="#ee7d1e"/><circle cx="36.20" cy="208.81" r="1.5" fill="#f2c21e"/>
<circle cx="55" cy="211" r="6.9" fill="url(#sph)" stroke="#c4c4c4" stroke-width="0.5"/><path d="M52.6 213.6C53.2 210.4 55.4 208.2 58.6 207.6L60 209.4C57.6 210 56 211.6 55.6 214.2Z" fill="#2a2018"/><path d="M55.6 214.2C56 212.4 57.6 211.2 59.6 211.2L60 213.2L57 215Z" fill="#c9823c"/><path d="M50 212.4L52.6 213.6L55.6 214.2L54.4 216L50.6 214.6Z" fill="#f4f4f4" stroke="#999" stroke-width="0.3"/>
<path d="M69 207C69 203.8 74.4 203.4 76.6 205.6C78.8 203.4 84.2 203.8 84.2 207V217.6H79.4L78.4 215H74.8L73.8 217.6H69Z" fill="#ec8a32"/><path d="M72.4 208.4Q72.4 207.4 73.4 207.4H79.8Q80.8 207.4 80.8 208.4V212.2H72.4Z" fill="#fff"/><path d="M73.6 209.2H79.6" stroke="#ec8a32" stroke-width="0.6"/><path d="M72.8 212.2V213.6M80.4 212.2V213.6" stroke="#fff" stroke-width="0.8"/>
<path d="M92.2 207.4L101.4 203.2L105.6 208.4L104.4 215.4L95.4 218.8Z" fill="#fff" stroke="#3a3a3a" stroke-width="0.7"/><path d="M92.8 207.8L101.2 204L104.6 208.4L96 212.2Z" fill="#d8382c"/><path d="M96.2 213.2L103.8 209.8L103.2 214.6L96.4 217.6Z" fill="#d8382c"/><path d="M96.4 208.4L100.6 206.6L102.2 208.6L98 210.4Z" fill="#fff"/><path d="M98.6 213.6L101.6 212.2V214.6L98.8 215.8Z" fill="#fff"/><path d="M92.8 208.6L95.6 212.6L95.4 217.8" fill="none" stroke="#b82a20" stroke-width="1.2"/>
<circle cx="8.8" cy="249.4" r="4.6" fill="#f2cb2c" stroke="#c8a018" stroke-width="0.6"/><rect x="6.8" y="253.6" width="4" height="3.2" fill="#999"/>
<rect x="1006.4" y="88" width="3.2" height="4.4" rx="0.6" fill="#3a3a3a"/><rect x="1007.2" y="88.8" width="1.2" height="2.6" fill="#bbb"/>
<path d="M1016.7 88.8L1020.7 92.8M1020.7 88.8L1016.7 92.8" stroke="#555" stroke-width="0.7"/>
<path d="M912 93.6H916.6" stroke="#0c1424" stroke-width="1.2"/><rect x="919.4" y="89.6" width="4.2" height="3.8" fill="none" stroke="#0c1424" stroke-width="0.9"/><path d="M920.8 89.4V88.2H925.2V92H923.8" fill="none" stroke="#0c1424" stroke-width="0.8"/><path d="M927.6 88L932.6 94M932.6 88L927.6 94" stroke="#0c1424" stroke-width="1.3"/>
<path d="M943.3 104.5V107.3H940.5Z" fill="#333"/>
<rect x="947" y="101.8" width="8.6" height="8" fill="#c8352b"/><rect x="947" y="107.2" width="8.6" height="2.8" fill="#e89a3c"/><rect x="950.6" y="101.8" width="1.4" height="3" fill="#fff"/>
<path d="M949.9 114.684V117.484H947.1Z" fill="#333"/>
<rect x="953.6" y="112.184" width="7.6" height="7.6" fill="#3c8ad6"/><path d="M956.2 112.184V115.78399999999999H953.6M958.2 119.78399999999999V117.184H961.2" fill="none" stroke="#fff" stroke-width="0.9"/>
<path d="M956.5 124.868V127.66799999999999H953.7Z" fill="#333"/>
<path d="M960.8 122.568H964.6L966.6 124.568V130.168H960.8Z" fill="#fff" stroke="#777" stroke-width="0.7"/><path d="M964.6 122.568V124.568H966.6" fill="none" stroke="#777" stroke-width="0.5"/>
<path d="M965.8 132.952V140.152M965.8 136.552H973.8" stroke="#bbb" stroke-width="0.7"/>
<path d="M949.9 145.236V148.036H947.1Z" fill="#333"/>
<path d="M954.0 142.93599999999998H957.8000000000001L959.8000000000001 144.93599999999998V150.536H954.0Z" fill="#fff" stroke="#777" stroke-width="0.7"/><path d="M957.8000000000001 142.93599999999998V144.93599999999998H959.8000000000001" fill="none" stroke="#777" stroke-width="0.5"/>
<path d="M960.8 153.11999999999998H964.6L966.6 155.11999999999998V160.72H960.8Z" fill="#fff" stroke="#777" stroke-width="0.7"/><path d="M964.6 153.11999999999998V155.11999999999998H966.6" fill="none" stroke="#777" stroke-width="0.5"/>
<path d="M954.0 163.30399999999997H957.8000000000001L959.8000000000001 165.30399999999997V170.904H954.0Z" fill="#fff" stroke="#777" stroke-width="0.7"/><path d="M957.8000000000001 163.30399999999997V165.30399999999997H959.8000000000001" fill="none" stroke="#777" stroke-width="0.5"/>
<path d="M949.9 175.788V178.58800000000002H947.1Z" fill="#333"/>
<path d="M954.0 173.488H957.8000000000001L959.8000000000001 175.488V181.08800000000002H954.0Z" fill="#fff" stroke="#777" stroke-width="0.7"/><path d="M957.8000000000001 173.488V175.488H959.8000000000001" fill="none" stroke="#777" stroke-width="0.5"/>
<path d="M960.8 183.67199999999997H964.6L966.6 185.67199999999997V191.272H960.8Z" fill="#fff" stroke="#777" stroke-width="0.7"/><path d="M964.6 183.67199999999997V185.67199999999997H966.6" fill="none" stroke="#777" stroke-width="0.5"/>
<path d="M960.8 193.856H964.6L966.6 195.856V201.45600000000002H960.8Z" fill="#fff" stroke="#777" stroke-width="0.7"/><path d="M964.6 193.856V195.856H966.6" fill="none" stroke="#777" stroke-width="0.5"/>
<path d="M960.8 204.03999999999996H964.6L966.6 206.03999999999996V211.64H960.8Z" fill="#fff" stroke="#777" stroke-width="0.7"/><path d="M964.6 204.03999999999996V206.03999999999996H966.6" fill="none" stroke="#777" stroke-width="0.5"/>
<path d="M960.8 214.224H964.6L966.6 216.224V221.824H960.8Z" fill="#fff" stroke="#777" stroke-width="0.7"/><path d="M964.6 214.224V216.224H966.6" fill="none" stroke="#777" stroke-width="0.5"/>
<rect x="954.0" y="224.608" width="6" height="7.2" fill="#ddd" stroke="#777" stroke-width="0.6"/><path d="M955.0 226.608H959.0M955.0 228.208H959.0M955.0 229.808H959.0" stroke="#555" stroke-width="0.6"/>
<rect x="954.0" y="234.792" width="6.2" height="7.2" fill="#fff" stroke="#888" stroke-width="0.6"/><rect x="955.0" y="235.792" width="2" height="2" fill="#e8b01e"/><rect x="957.2" y="238.192" width="2" height="2" fill="#5bb45a"/><rect x="955.0" y="239.192" width="1.6" height="1.6" fill="#3c8ad6"/>
<path d="M949.9 247.076V249.876H947.1Z" fill="#333"/>
<path d="M953.6 245.376H956.6L957.6 246.376H961.4V251.976H953.6Z" fill="#f2c21e" stroke="#c89a10" stroke-width="0.5"/>
<path d="M960.8 254.95999999999998H964.6L966.6 256.96V262.56H960.8Z" fill="#fff" stroke="#777" stroke-width="0.7"/><path d="M964.6 254.95999999999998V256.96H966.6" fill="none" stroke="#777" stroke-width="0.5"/>
<path d="M960.8 265.14399999999995H964.6L966.6 267.14399999999995V272.74399999999997H960.8Z" fill="#fff" stroke="#777" stroke-width="0.7"/><path d="M964.6 265.14399999999995V267.14399999999995H966.6" fill="none" stroke="#777" stroke-width="0.5"/>
<path d="M960.8 275.328H964.6L966.6 277.328V282.928H960.8Z" fill="#fff" stroke="#777" stroke-width="0.7"/><path d="M964.6 275.328V277.328H966.6" fill="none" stroke="#777" stroke-width="0.5"/>
<path d="M949.9 287.812V290.612H947.1Z" fill="#333"/>
<rect x="953.6" y="286.312" width="2.4" height="6" fill="#777"/><path d="M957.2 286.91200000000003H961.0M957.2 289.312H961.0M957.2 291.712H961.0" stroke="#aaa" stroke-width="0.8"/>
<path d="M954.4000000000001 297.496L956.6 299.496L954.4000000000001 301.496Z" fill="#222"/>
<path d="M960.8 295.89599999999996H964.4L966.4 297.69599999999997V303.096H960.8Z" fill="#fff" stroke="#999" stroke-width="0.6"/><path d="M963.4 299.096L966.6 302.096L964.8 301.89599999999996L963.8 303.296Z" fill="#222"/>
<path d="M954.4000000000001 307.67999999999995L956.6 309.67999999999995L954.4000000000001 311.67999999999995Z" fill="#222"/>
<path d="M960.8 306.0799999999999H964.4L966.4 307.87999999999994V313.28H960.8Z" fill="#fff" stroke="#999" stroke-width="0.6"/><path d="M963.4 309.28L966.6 312.28L964.8 312.0799999999999L963.8 313.47999999999996Z" fill="#222"/>
<path d="M954.4000000000001 317.864L956.6 319.864L954.4000000000001 321.864Z" fill="#222"/>
<path d="M960.8 316.26399999999995H964.4L966.4 318.06399999999996V323.464H960.8Z" fill="#fff" stroke="#999" stroke-width="0.6"/><path d="M963.4 319.464L966.6 322.464L964.8 322.26399999999995L963.8 323.664Z" fill="#222"/>
<path d="M954.4000000000001 328.048L956.6 330.048L954.4000000000001 332.048Z" fill="#222"/>
<path d="M960.8 326.448H964.4L966.4 328.248V333.648H960.8Z" fill="#fff" stroke="#999" stroke-width="0.6"/><path d="M963.4 329.648L966.6 332.648L964.8 332.448L963.8 333.848Z" fill="#222"/>
<path d="M954.4000000000001 338.23199999999997L956.6 340.23199999999997L954.4000000000001 342.23199999999997Z" fill="#222"/>
<path d="M960.8 336.63199999999995H964.4L966.4 338.43199999999996V343.832H960.8Z" fill="#fff" stroke="#999" stroke-width="0.6"/><path d="M963.4 339.832L966.6 342.832L964.8 342.63199999999995L963.8 344.032Z" fill="#222"/>
<path d="M954.4000000000001 348.416L956.6 350.416L954.4000000000001 352.416Z" fill="#222"/>
<path d="M960.8 346.816H964.4L966.4 348.616V354.016H960.8Z" fill="#fff" stroke="#999" stroke-width="0.6"/><path d="M963.4 350.016L966.6 353.016L964.8 352.816L963.8 354.216Z" fill="#222"/>
<path d="M954.4000000000001 358.6L956.6 360.6L954.4000000000001 362.6Z" fill="#222"/>
<path d="M960.8 357.0H964.4L966.4 358.8V364.20000000000005H960.8Z" fill="#fff" stroke="#999" stroke-width="0.6"/><path d="M963.4 360.20000000000005L966.6 363.20000000000005L964.8 363.0L963.8 364.40000000000003Z" fill="#222"/>
<path d="M954.4000000000001 368.784L956.6 370.784L954.4000000000001 372.784Z" fill="#222"/>
<path d="M960.8 367.18399999999997H964.4L966.4 368.984V374.384H960.8Z" fill="#fff" stroke="#999" stroke-width="0.6"/><path d="M963.4 370.384L966.6 373.384L964.8 373.18399999999997L963.8 374.584Z" fill="#222"/>
<path d="M954.4000000000001 378.96799999999996L956.6 380.96799999999996L954.4000000000001 382.96799999999996Z" fill="#222"/>
<path d="M960.8 377.36799999999994H964.4L966.4 379.16799999999995V384.568H960.8Z" fill="#fff" stroke="#999" stroke-width="0.6"/><path d="M963.4 380.568L966.6 383.568L964.8 383.36799999999994L963.8 384.768Z" fill="#222"/>
<path d="M954.4000000000001 389.152L956.6 391.152L954.4000000000001 393.152Z" fill="#222"/>
<path d="M960.8 387.55199999999996H964.4L966.4 389.352V394.752H960.8Z" fill="#fff" stroke="#999" stroke-width="0.6"/><path d="M963.4 390.752L966.6 393.752L964.8 393.55199999999996L963.8 394.952Z" fill="#222"/>
<path d="M954.4000000000001 399.33599999999996L956.6 401.33599999999996L954.4000000000001 403.33599999999996Z" fill="#222"/>
<path d="M960.8 397.73599999999993H964.4L966.4 399.53599999999994V404.936H960.8Z" fill="#fff" stroke="#999" stroke-width="0.6"/><path d="M963.4 400.936L966.6 403.936L964.8 403.73599999999993L963.8 405.13599999999997Z" fill="#222"/>
<path d="M954.4000000000001 409.52L956.6 411.52L954.4000000000001 413.52Z" fill="#222"/>
<path d="M960.8 407.91999999999996H964.4L966.4 409.71999999999997V415.12H960.8Z" fill="#fff" stroke="#999" stroke-width="0.6"/><path d="M963.4 411.12L966.6 414.12L964.8 413.91999999999996L963.8 415.32Z" fill="#222"/>
<path d="M954.4000000000001 419.70399999999995L956.6 421.70399999999995L954.4000000000001 423.70399999999995Z" fill="#222"/>
<path d="M960.8 418.1039999999999H964.4L966.4 419.90399999999994V425.304H960.8Z" fill="#fff" stroke="#999" stroke-width="0.6"/><path d="M963.4 421.304L966.6 424.304L964.8 424.1039999999999L963.8 425.50399999999996Z" fill="#222"/>
<path d="M954.4000000000001 429.888L956.6 431.888L954.4000000000001 433.888Z" fill="#222"/>
<path d="M960.8 428.28799999999995H964.4L966.4 430.08799999999997V435.488H960.8Z" fill="#fff" stroke="#999" stroke-width="0.6"/><path d="M963.4 431.488L966.6 434.488L964.8 434.28799999999995L963.8 435.688Z" fill="#222"/>
<path d="M954.4000000000001 440.072L956.6 442.072L954.4000000000001 444.072Z" fill="#222"/>
<path d="M960.8 438.472H964.4L966.4 440.272V445.672H960.8Z" fill="#fff" stroke="#999" stroke-width="0.6"/><path d="M963.4 441.672L966.6 444.672L964.8 444.472L963.8 445.872Z" fill="#222"/>
<path d="M954.4000000000001 450.256L956.6 452.256L954.4000000000001 454.256Z" fill="#222"/>
<path d="M960.8 448.65599999999995H964.4L966.4 450.45599999999996V455.856H960.8Z" fill="#fff" stroke="#999" stroke-width="0.6"/><path d="M963.4 451.856L966.6 454.856L964.8 454.65599999999995L963.8 456.056Z" fill="#222"/>
<path d="M954.4000000000001 460.44L956.6 462.44L954.4000000000001 464.44Z" fill="#222"/>
<path d="M960.8 458.84H964.4L966.4 460.64V466.04H960.8Z" fill="#fff" stroke="#999" stroke-width="0.6"/><path d="M963.4 462.04L966.6 465.04L964.8 464.84L963.8 466.24Z" fill="#222"/>
<path d="M954.4000000000001 470.62399999999997L956.6 472.62399999999997L954.4000000000001 474.62399999999997Z" fill="#222"/>
<path d="M960.8 469.02399999999994H964.4L966.4 470.82399999999996V476.224H960.8Z" fill="#fff" stroke="#999" stroke-width="0.6"/><path d="M963.4 472.224L966.6 475.224L964.8 475.02399999999994L963.8 476.424Z" fill="#222"/>
<path d="M954.4000000000001 480.808L956.6 482.808L954.4000000000001 484.808Z" fill="#222"/>
<path d="M960.8 479.20799999999997H964.4L966.4 481.008V486.408H960.8Z" fill="#fff" stroke="#999" stroke-width="0.6"/><path d="M963.4 482.408L966.6 485.408L964.8 485.20799999999997L963.8 486.608Z" fill="#222"/>
<path d="M954.4000000000001 490.99199999999996L956.6 492.99199999999996L954.4000000000001 494.99199999999996Z" fill="#222"/>
<path d="M960.8 489.39199999999994H964.4L966.4 491.19199999999995V496.592H960.8Z" fill="#fff" stroke="#999" stroke-width="0.6"/><path d="M963.4 492.592L966.6 495.592L964.8 495.39199999999994L963.8 496.792Z" fill="#222"/>
<path d="M204.5 511.4H207.1L205.8 513Z" fill="#444"/>
<path d="M222.2 511.4H224.8L223.5 513Z" fill="#333"/>
<g transform="translate(-0.4,1)">
<circle cx="9" cy="542.2" r="4.3" fill="none" stroke="#3c3c3c" stroke-width="2.8"/><circle cx="13.85" cy="545.00" r="1.5" fill="#3c3c3c"/><circle cx="9.00" cy="547.80" r="1.5" fill="#3c3c3c"/><circle cx="4.15" cy="545.00" r="1.5" fill="#3c3c3c"/><circle cx="4.15" cy="539.40" r="1.5" fill="#3c3c3c"/><circle cx="9.00" cy="536.60" r="1.5" fill="#3c3c3c"/><circle cx="13.85" cy="539.40" r="1.5" fill="#3c3c3c"/>
<rect x="29.6" y="536.6" width="2.6" height="2.6" fill="#666"/><rect x="29.6" y="541.0" width="2.6" height="2.6" fill="#666"/><rect x="29.6" y="545.4" width="2.6" height="2.6" fill="#666"/><rect x="34.0" y="536.6" width="2.6" height="2.6" fill="#666"/><rect x="34.0" y="541.0" width="2.6" height="2.6" fill="#666"/><rect x="34.0" y="545.4" width="2.6" height="2.6" fill="#666"/><rect x="38.400000000000006" y="536.6" width="2.6" height="2.6" fill="#666"/><rect x="38.400000000000006" y="541.0" width="2.6" height="2.6" fill="#666"/><rect x="38.400000000000006" y="545.4" width="2.6" height="2.6" fill="#666"/>
<rect x="56" y="537.4" width="10" height="10" fill="none" stroke="#555" stroke-width="0.9"/><rect x="54.9" y="536.3" width="2.2" height="2.2" fill="#444"/><rect x="54.9" y="546.3" width="2.2" height="2.2" fill="#444"/><rect x="64.9" y="536.3" width="2.2" height="2.2" fill="#444"/><rect x="64.9" y="546.3" width="2.2" height="2.2" fill="#444"/>
<path d="M82.6 541.8L86.6 545.8A3.9 3.9 0 0 0 92.1 540.3L88.1 536.3" fill="none" stroke="#dd3a2c" stroke-width="3.7"/><circle cx="82" cy="541.2" r="1.9" fill="#fafafa" stroke="#bbb" stroke-width="0.4"/><circle cx="87.5" cy="535.7" r="1.9" fill="#fafafa" stroke="#bbb" stroke-width="0.4"/>
<path d="M102.4 534.4V549.4H118M102.4 549.4L104.8 535M102.4 549.4L110.4 537.4M102.4 549.4L115.6 542M102.4 549.4L117.6 546.6" fill="none" stroke="#888" stroke-width="0.7"/>
<path d="M131.6 536H137.4L140.4 539V548.6H131.6Z" fill="#fff" stroke="#777" stroke-width="0.8"/><path d="M137.4 536V539H140.4" fill="none" stroke="#777" stroke-width="0.6"/><path d="M137 542L142.4 547.2L140 547.2L141.2 549.8L140 550.4L138.8 547.8L137 549.4Z" fill="#3c3c3c"/>
<rect x="156.6" y="536.1999999999999" width="2.6" height="2.6" fill="#3c3c3c"/><path d="M161 537.4H171.4" stroke="#3c3c3c" stroke-width="1.7"/><rect x="156.6" y="541.1999999999999" width="2.6" height="2.6" fill="#3c3c3c"/><path d="M161 542.4H171.4" stroke="#3c3c3c" stroke-width="1.7"/><rect x="156.6" y="546.1999999999999" width="2.6" height="2.6" fill="#3c3c3c"/><path d="M161 547.4H171.4" stroke="#3c3c3c" stroke-width="1.7"/>
<path d="M181.6 546V541.6L184.8 538.6L188 541.6V546Z" fill="#c0392b"/><rect x="181" y="543" width="2.2" height="3" fill="#5bb45a"/><rect x="186" y="542.4" width="2.2" height="2" fill="#3c8ad6"/>
</g>
<path d="M377.4 541.4L380.4 544.4L383.4 541.4" fill="none" stroke="#666" stroke-width="0.8"/>
<path d="M689 541.2L692 544.2L695 541.2" fill="none" stroke="#666" stroke-width="0.8"/>
<path d="M407.9 538.2L412.9 543.6H410V549.4H405.8V543.6H402.9Z" fill="#4a90d8"/>
<path d="M433.9 549.4L438.9 544H436V538.2H431.8V544H428.9Z" fill="#4a90d8"/>
<path d="M453.6 548.4L460 541" stroke="#d4883a" stroke-width="2.1"/><path d="M456.8 538.4C459.8 536.4 463.6 537.6 465 540.8L462.4 542.6C461.4 540.8 459.8 540.2 458.2 541Z" fill="#555"/>
<path d="M477.7 541.6H480.3L479 543.2Z" fill="#333"/>
<path d="M713.6 543L720 538.4L725.4 540.4L719 545.4Z" fill="#e0392a"/><path d="M713.6 543V546.4L719 549V545.4Z" fill="#3c78c8"/><path d="M719 545.4L725.4 540.4V543.8L719 549Z" fill="#c42a1e"/>
<path d="M738.2 541.6H740.8L739.5 543.2Z" fill="#333"/>
<path d="M756.8 550L762.8 535.4L768.8 550L762.8 545Z" fill="#a4a4a4" stroke="#3a3a3a" stroke-width="1"/>
<path d="M780.7 541.6H783.3L782 543.2Z" fill="#333"/>
<path d="M803.4 543.4L808.8 538.6" stroke="#333" stroke-width="0.9" stroke-dasharray="1.6 0.9"/><path d="M801.3 541.6L802.3 544.5L805.2 545.5L802.3 546.5L801.3 549.4L800.3 546.5L797.4 545.5L800.3 544.5Z" fill="#2f5fae"/><circle cx="809" cy="538.4" r="0.8" fill="#3c8ad6"/>
<path d="M822.8 536.6V549H835.4" fill="none" stroke="#333" stroke-width="1"/><path d="M821.2 538.6L822.8 536.2L824.4 538.6M833.4 547.4L835.8 549L833.4 550.6" fill="none" stroke="#333" stroke-width="0.8"/>
<path d="M850.6 546L859 540.4" stroke="#3c7ad0" stroke-width="1"/><rect x="848" y="544.8" width="3.6" height="3.6" fill="#fff" stroke="#333" stroke-width="0.9"/><rect x="857.8" y="538.2" width="3.6" height="3.6" fill="#fff" stroke="#333" stroke-width="0.9"/>
<path d="M873.2 541.6H875.8L874.5 543.2Z" fill="#666"/>
</svg>
<span class="t" style="left:436.60px;top:88.09px;font-size:7px;color:#1c2a44;transform:scaleX(0.9100);">bathRoom_CarpenterA - Default - Ground (0 mm) *</span>
<span class="t" style="left:466.90px;top:306.21px;font-size:16px;color:#111;transform:scaleX(0.9927);-webkit-text-stroke:0.45px #111;">bathroom</span>
<span class="t" style="left:13.50px;top:3.79px;font-size:7px;color:#3a3a3a;transform:scaleX(0.8826);">ARCHLine.XP 2019</span>
<span class="t" style="left:73.20px;top:3.79px;font-size:7px;color:#3a3a3a;transform:scaleX(0.8590);">Professional</span>
<span class="t" style="left:109.40px;top:3.79px;font-size:7px;color:#3a3a3a;">-</span>
<span class="t" style="left:114.40px;top:3.79px;font-size:7px;color:#3a3a3a;transform:scaleX(0.8174);">C:₩Users₩user₩Desktop₩</span>
<span class="t" style="left:189.20px;top:3.79px;font-size:7px;color:#3a3a3a;transform:scaleX(0.9405);">bathroom with separate powder room.pro</span>
<span class="t" style="left:4.40px;top:20.19px;font-size:7px;color:#3a3a4a;transform:scaleX(0.8687);">File</span>
<span class="t" style="left:335.80px;top:20.79px;font-size:7px;color:#444;transform:scaleX(0.9451);">Edit</span>
<span class="t" style="left:365.00px;top:20.79px;font-size:7px;color:#444;transform:scaleX(0.9371);">View</span>
<span class="t" style="left:396.40px;top:20.79px;font-size:7px;color:#444;transform:scaleX(0.9750);">Building</span>
<span class="t" style="left:438.00px;top:20.79px;font-size:7px;color:#444;transform:scaleX(1.0368);">Interior</span>
<span class="t" style="left:477.60px;top:20.79px;font-size:7px;color:#444;transform:scaleX(1.0361);">Drafting</span>
<span class="t" style="left:520.00px;top:20.79px;font-size:7px;color:#444;transform:scaleX(0.9916);">Dimension</span>
<span class="t" style="left:570.00px;top:20.79px;font-size:7px;color:#444;">Documentation</span>
<span class="t" style="left:937.00px;top:19.89px;font-size:7px;color:#333;transform:scaleX(0.8563);">Search</span>
<span class="t" style="left:1010.60px;top:17.74px;font-size:11px;color:#222;font-weight:bold;">?</span>
<span class="t" style="left:293.20px;top:22.90px;font-size:8px;color:#222;font-weight:bold;">+</span>
<span class="t" style="left:300.00px;top:21.90px;font-size:8px;color:#222;font-weight:bold;">?</span>
<span class="t" style="left:301.60px;top:15.30px;font-size:8px;color:#222;font-weight:bold;">+</span>
<span class="t" style="left:4.30px;top:54.59px;font-size:7px;color:#4a4a4a;transform:scaleX(1.0092);">Properties</span>
<span class="t" style="left:50.40px;top:54.59px;font-size:7px;color:#4a4a4a;transform:scaleX(0.9806);">Wall</span>
<span class="t" style="left:88.30px;top:41.09px;font-size:7px;color:#4a4a4a;transform:scaleX(0.9712);">Connection</span>
<span class="t" style="left:88.30px;top:58.79px;font-size:7px;color:#4a4a4a;transform:scaleX(0.9368);">Edit</span>
<span class="t" style="left:143.00px;top:54.59px;font-size:7px;color:#4a4a4a;transform:scaleX(0.9745);">Door</span>
<span class="t" style="left:171.00px;top:54.59px;font-size:7px;color:#4a4a4a;transform:scaleX(0.9757);">Window</span>
<span class="t" style="left:207.60px;top:54.59px;font-size:7px;color:#4a4a4a;transform:scaleX(0.9705);">Curtain wall</span>
<span class="t" style="left:255.00px;top:54.59px;font-size:7px;color:#4a4a4a;transform:scaleX(0.9658);">Column</span>
<span class="t" style="left:285.30px;top:54.59px;font-size:7px;color:#4a4a4a;transform:scaleX(0.9291);">Beam</span>
<span class="t" style="left:312.00px;top:54.59px;font-size:7px;color:#4a4a4a;transform:scaleX(0.9133);">Slab</span>
<span class="t" style="left:337.50px;top:54.59px;font-size:7px;color:#4a4a4a;transform:scaleX(0.9799);">Roof</span>
<span class="t" style="left:364.20px;top:54.59px;font-size:7px;color:#4a4a4a;transform:scaleX(0.9717);">Ceiling</span>
<span class="t" style="left:399.00px;top:54.59px;font-size:7px;color:#4a4a4a;transform:scaleX(0.9024);">Stair</span>
<span class="t" style="left:425.00px;top:54.59px;font-size:7px;color:#4a4a4a;transform:scaleX(0.9365);">Ramp</span>
<span class="t" style="left:455.20px;top:54.59px;font-size:7px;color:#4a4a4a;transform:scaleX(0.9577);">Railing</span>
<span class="t" style="left:489.80px;top:54.59px;font-size:7px;color:#4a4a4a;transform:scaleX(0.9945);">Room and area</span>
<span class="t" style="left:550.00px;top:54.59px;font-size:7px;color:#4a4a4a;">Surveyed room</span>
<span class="t" style="left:612.00px;top:54.59px;font-size:7px;color:#4a4a4a;transform:scaleX(1.0182);">Google Maps</span>
<span class="t" style="left:666.70px;top:54.59px;font-size:7px;color:#4a4a4a;transform:scaleX(0.9857);">Terrain</span>
<span class="t" style="left:701.80px;top:54.59px;font-size:7px;color:#4a4a4a;">Point cloud</span>
<span class="t" style="left:4.00px;top:74.19px;font-size:7px;color:#555;">Properties</span>
<span class="t" style="left:83.00px;top:74.19px;font-size:7px;color:#555;transform:scaleX(0.9207);">Wall</span>
<span class="t" style="left:179.30px;top:74.19px;font-size:7px;color:#555;transform:scaleX(0.9936);">Opening</span>
<span class="t" style="left:306.80px;top:74.19px;font-size:7px;color:#555;transform:scaleX(0.9611);">Structure</span>
<span class="t" style="left:429.80px;top:74.19px;font-size:7px;color:#555;transform:scaleX(0.9093);">Stair</span>
<span class="t" style="left:533.90px;top:74.19px;font-size:7px;color:#555;transform:scaleX(0.9632);">Room</span>
<span class="t" style="left:622.70px;top:74.19px;font-size:7px;color:#555;transform:scaleX(0.9832);">Massing and Site</span>
<span class="t" style="left:701.30px;top:74.19px;font-size:7px;color:#555;">Point cloud</span>
<span class="t" style="left:-1.40px;top:86.59px;font-size:7px;color:#333;font-weight:bold;transform:scaleX(0.9331);">Design center</span>
<span class="t" style="left:8.20px;top:104.59px;font-size:7px;color:#444;transform:scaleX(0.9003);">[Search in all items]</span>
<span class="t" style="left:2.20px;top:137.09px;font-size:7px;color:#d07a28;font-weight:bold;transform:scaleX(0.8500);">Building</span>
<span class="t" style="left:2.20px;top:190.29px;font-size:7px;color:#d07a28;font-weight:bold;transform:scaleX(0.8336);">Catalog</span>
<span class="t" style="left:2.20px;top:282.84px;font-size:7px;color:#c0712a;font-weight:bold;transform:scaleX(0.8956);">Recent models</span>
<span class="t" style="left:2.20px;top:298.14px;font-size:7px;color:#c0712a;font-weight:bold;transform:scaleX(0.9071);">my favourites</span>
<span class="t" style="left:2.20px;top:311.84px;font-size:7px;color:#c0712a;font-weight:bold;transform:scaleX(0.9096);">Help</span>
<span class="t" style="left:2.20px;top:172.59px;font-size:7px;color:#3c5a4e;transform:scaleX(0.9086);">Door</span>
<span class="t" style="left:24.10px;top:167.89px;font-size:7px;color:#3c5a4e;transform:scaleX(0.9340);">Wind</span>
<span class="t" style="left:16.55px;width:30px;text-align:center;top:176.69px;font-size:7px;color:#3c5a4e">ow</span>
<span class="t" style="left:48.00px;top:172.59px;font-size:7px;color:#3c5a4e;transform:scaleX(0.8330);">Stair</span>
<span class="t" style="left:68.00px;top:172.59px;font-size:7px;color:#3c5a4e;transform:scaleX(0.8920);">Profile</span>
<span class="t" style="left:90.20px;top:172.59px;font-size:7px;color:#3c5a4e;transform:scaleX(0.8835);">Group</span>
<span class="t" style="left:0.00px;top:220.89px;font-size:7px;color:#3c5a4e;transform:scaleX(0.8896);">Object</span>
<span class="t" style="left:-6.0px;width:30px;text-align:center;top:229.49px;font-size:7px;color:#3c5a4e">s</span>
<span class="t" style="left:22.70px;top:220.89px;font-size:7px;color:#3c5a4e;transform:scaleX(0.9304);">Materi</span>
<span class="t" style="left:16.75px;width:30px;text-align:center;top:229.49px;font-size:7px;color:#3c5a4e">als</span>
<span class="t" style="left:45.00px;top:220.89px;font-size:7px;color:#3c5a4e;transform:scaleX(0.8527);">Rende</span>
<span class="t" style="left:38.8px;width:30px;text-align:center;top:229.49px;font-size:7px;color:#3c5a4e">r style</span>
<span class="t" style="left:67.50px;top:220.89px;font-size:7px;color:#3c5a4e;transform:scaleX(0.8819);">Showr</span>
<span class="t" style="left:61.25px;width:30px;text-align:center;top:229.49px;font-size:7px;color:#3c5a4e">oom</span>
<span class="t" style="left:95.30px;top:220.89px;font-size:7px;color:#3c5a4e;transform:scaleX(0.8600);">3D</span>
<span class="t" style="left:90.20px;top:229.49px;font-size:7px;color:#3c5a4e;transform:scaleX(0.9016);">wareh</span>
<span class="t" style="left:2.20px;top:260.79px;font-size:7px;color:#3c5a4e;transform:scaleX(0.9086);">Light</span>
<span class="t" style="left:1.50px;top:269.49px;font-size:7px;color:#3c5a4e;transform:scaleX(0.8307);">Sourc</span>
<span class="t" style="left:2.60px;top:491.29px;font-size:7px;color:#555;transform:scaleX(0.8744);">Properties</span>
<span class="t" style="left:38.00px;top:491.29px;font-size:7px;color:#444;transform:scaleX(0.9143);">Design center</span>
<span class="t" style="left:938.60px;top:86.49px;font-size:7px;color:#333;font-weight:bold;transform:scaleX(0.9128);">Project navigator</span>
<span class="t" style="left:958.60px;top:101.89px;font-size:7px;color:#222;font-weight:bold;transform:scaleX(0.8968);">Views (6)</span>
<span class="t" style="left:964.80px;top:112.08px;font-size:7px;color:#333;transform:scaleX(0.9024);">Floor plan</span>
<span class="t" style="left:971.60px;top:122.26px;font-size:7px;color:#222;font-weight:bold;transform:scaleX(0.8521);">bathRoom_Carp</span>
<span class="t" style="left:978.00px;top:132.44px;font-size:7px;color:#444;transform:scaleX(0.9504);">Ground</span>
<span class="t" style="left:964.80px;top:142.63px;font-size:7px;color:#444;transform:scaleX(0.8773);">View</span>
<span class="t" style="left:971.60px;top:152.81px;font-size:7px;color:#444;transform:scaleX(0.8988);">View_Perspectiv</span>
<span class="t" style="left:964.80px;top:162.99px;font-size:7px;color:#444;transform:scaleX(0.8947);">Section</span>
<span class="t" style="left:964.80px;top:173.18px;font-size:7px;color:#444;transform:scaleX(0.8925);">Elevation</span>
<span class="t" style="left:971.60px;top:183.36px;font-size:7px;color:#444;transform:scaleX(0.8639);">East elevation</span>
<span class="t" style="left:971.60px;top:193.55px;font-size:7px;color:#444;transform:scaleX(0.9173);">North elevation</span>
<span class="t" style="left:971.60px;top:203.73px;font-size:7px;color:#444;transform:scaleX(0.8950);">South elevation</span>
<span class="t" style="left:971.60px;top:213.91px;font-size:7px;color:#444;transform:scaleX(0.8909);">West elevation</span>
<span class="t" style="left:964.80px;top:224.10px;font-size:7px;color:#444;transform:scaleX(0.9453);">Plot layout</span>
<span class="t" style="left:964.80px;top:234.28px;font-size:7px;color:#a8a8a8;transform:scaleX(0.9315);">Mood board</span>
<span class="t" style="left:964.80px;top:244.47px;font-size:7px;color:#444;transform:scaleX(0.8944);">Rendering</span>
<span class="t" style="left:971.60px;top:254.65px;font-size:7px;color:#444;transform:scaleX(0.9735);">기본값 0</span>
<span class="t" style="left:971.60px;top:264.83px;font-size:7px;color:#444;transform:scaleX(0.8803);">뷰(View)_0</span>
<span class="t" style="left:971.60px;top:275.02px;font-size:7px;color:#444;transform:scaleX(0.8803);">뷰(View)_2</span>
<span class="t" style="left:964.80px;top:285.20px;font-size:7px;color:#444;transform:scaleX(0.8592);">Schedules</span>
<span class="t" style="left:971.60px;top:295.39px;font-size:7px;color:#444;transform:scaleX(0.8638);">3D Shape</span>
<span class="t" style="left:971.60px;top:305.57px;font-size:7px;color:#444;transform:scaleX(0.9510);">Beam</span>
<span class="t" style="left:971.60px;top:315.75px;font-size:7px;color:#444;transform:scaleX(0.9279);">Cabinet</span>
<span class="t" style="left:971.60px;top:325.94px;font-size:7px;color:#444;transform:scaleX(0.9078);">Column</span>
<span class="t" style="left:971.60px;top:336.12px;font-size:7px;color:#444;transform:scaleX(0.9353);">Countertop</span>
<span class="t" style="left:971.60px;top:346.31px;font-size:7px;color:#444;transform:scaleX(0.9257);">Curtain</span>
<span class="t" style="left:971.60px;top:356.49px;font-size:7px;color:#444;transform:scaleX(0.9481);">Door</span>
<span class="t" style="left:971.60px;top:366.68px;font-size:7px;color:#444;transform:scaleX(0.8833);">Electrical Access</span>
<span class="t" style="left:971.60px;top:376.86px;font-size:7px;color:#444;transform:scaleX(0.9396);">Grid ceiling</span>
<span class="t" style="left:971.60px;top:387.04px;font-size:7px;color:#444;transform:scaleX(0.9194);">Group</span>
<span class="t" style="left:971.60px;top:397.23px;font-size:7px;color:#444;transform:scaleX(0.9202);">Gutter</span>
<span class="t" style="left:971.60px;top:407.41px;font-size:7px;color:#444;transform:scaleX(0.9113);">LED lighting</span>
<span class="t" style="left:971.60px;top:417.59px;font-size:7px;color:#444;transform:scaleX(0.9267);">Luminous text</span>
<span class="t" style="left:971.60px;top:427.78px;font-size:7px;color:#444;transform:scaleX(0.9640);">Moulding</span>
<span class="t" style="left:971.60px;top:437.96px;font-size:7px;color:#444;transform:scaleX(0.9341);">Object</span>
<span class="t" style="left:971.60px;top:448.15px;font-size:7px;color:#444;transform:scaleX(0.9359);">Picture</span>
<span class="t" style="left:971.60px;top:458.33px;font-size:7px;color:#444;transform:scaleX(0.9208);">Plain ceiling</span>
<span class="t" style="left:971.60px;top:468.51px;font-size:7px;color:#444;transform:scaleX(0.9363);">Plinth</span>
<span class="t" style="left:971.60px;top:478.70px;font-size:7px;color:#444;transform:scaleX(0.8829);">Railing</span>
<span class="t" style="left:971.60px;top:488.88px;font-size:7px;color:#444;transform:scaleX(0.8508);">Ramp</span>
<span class="t" style="left:0.4px;top:530.4px;font-size:7.4px;color:#222;transform:rotate(-90deg);transform-origin:0 0">View ...</span>
<span class="t" style="left:12.70px;top:515.49px;font-size:7px;color:#666;transform:scaleX(0.9369);clip-path:inset(38% 0 0 0);">Click to select, press shift to add/deselect</span>
<span class="t" style="left:191.70px;top:539.09px;font-size:7px;color:#333;transform:scaleX(0.9033);">Ground</span>
<span class="t" style="left:502.90px;top:539.09px;font-size:7px;color:#333;transform:scaleX(0.8220);">_Layer 0</span>
<span class="t" style="left:893.00px;top:537.69px;font-size:7px;color:#333;transform:scaleX(0.9673);">(x) 8233.6</span>
<span class="t" style="left:930.00px;top:537.69px;font-size:7px;color:#333;transform:scaleX(0.9585);">(y) -8576.4 mm</span>
<span class="t" style="left:459.40px;top:545.70px;font-size:4.6px;color:#222;font-weight:bold;">3D</span>
<span class="t" style="left:825.20px;top:540.15px;font-size:8.6px;color:#333;transform:scaleX(0.9005);">R</span>
</body></html>
